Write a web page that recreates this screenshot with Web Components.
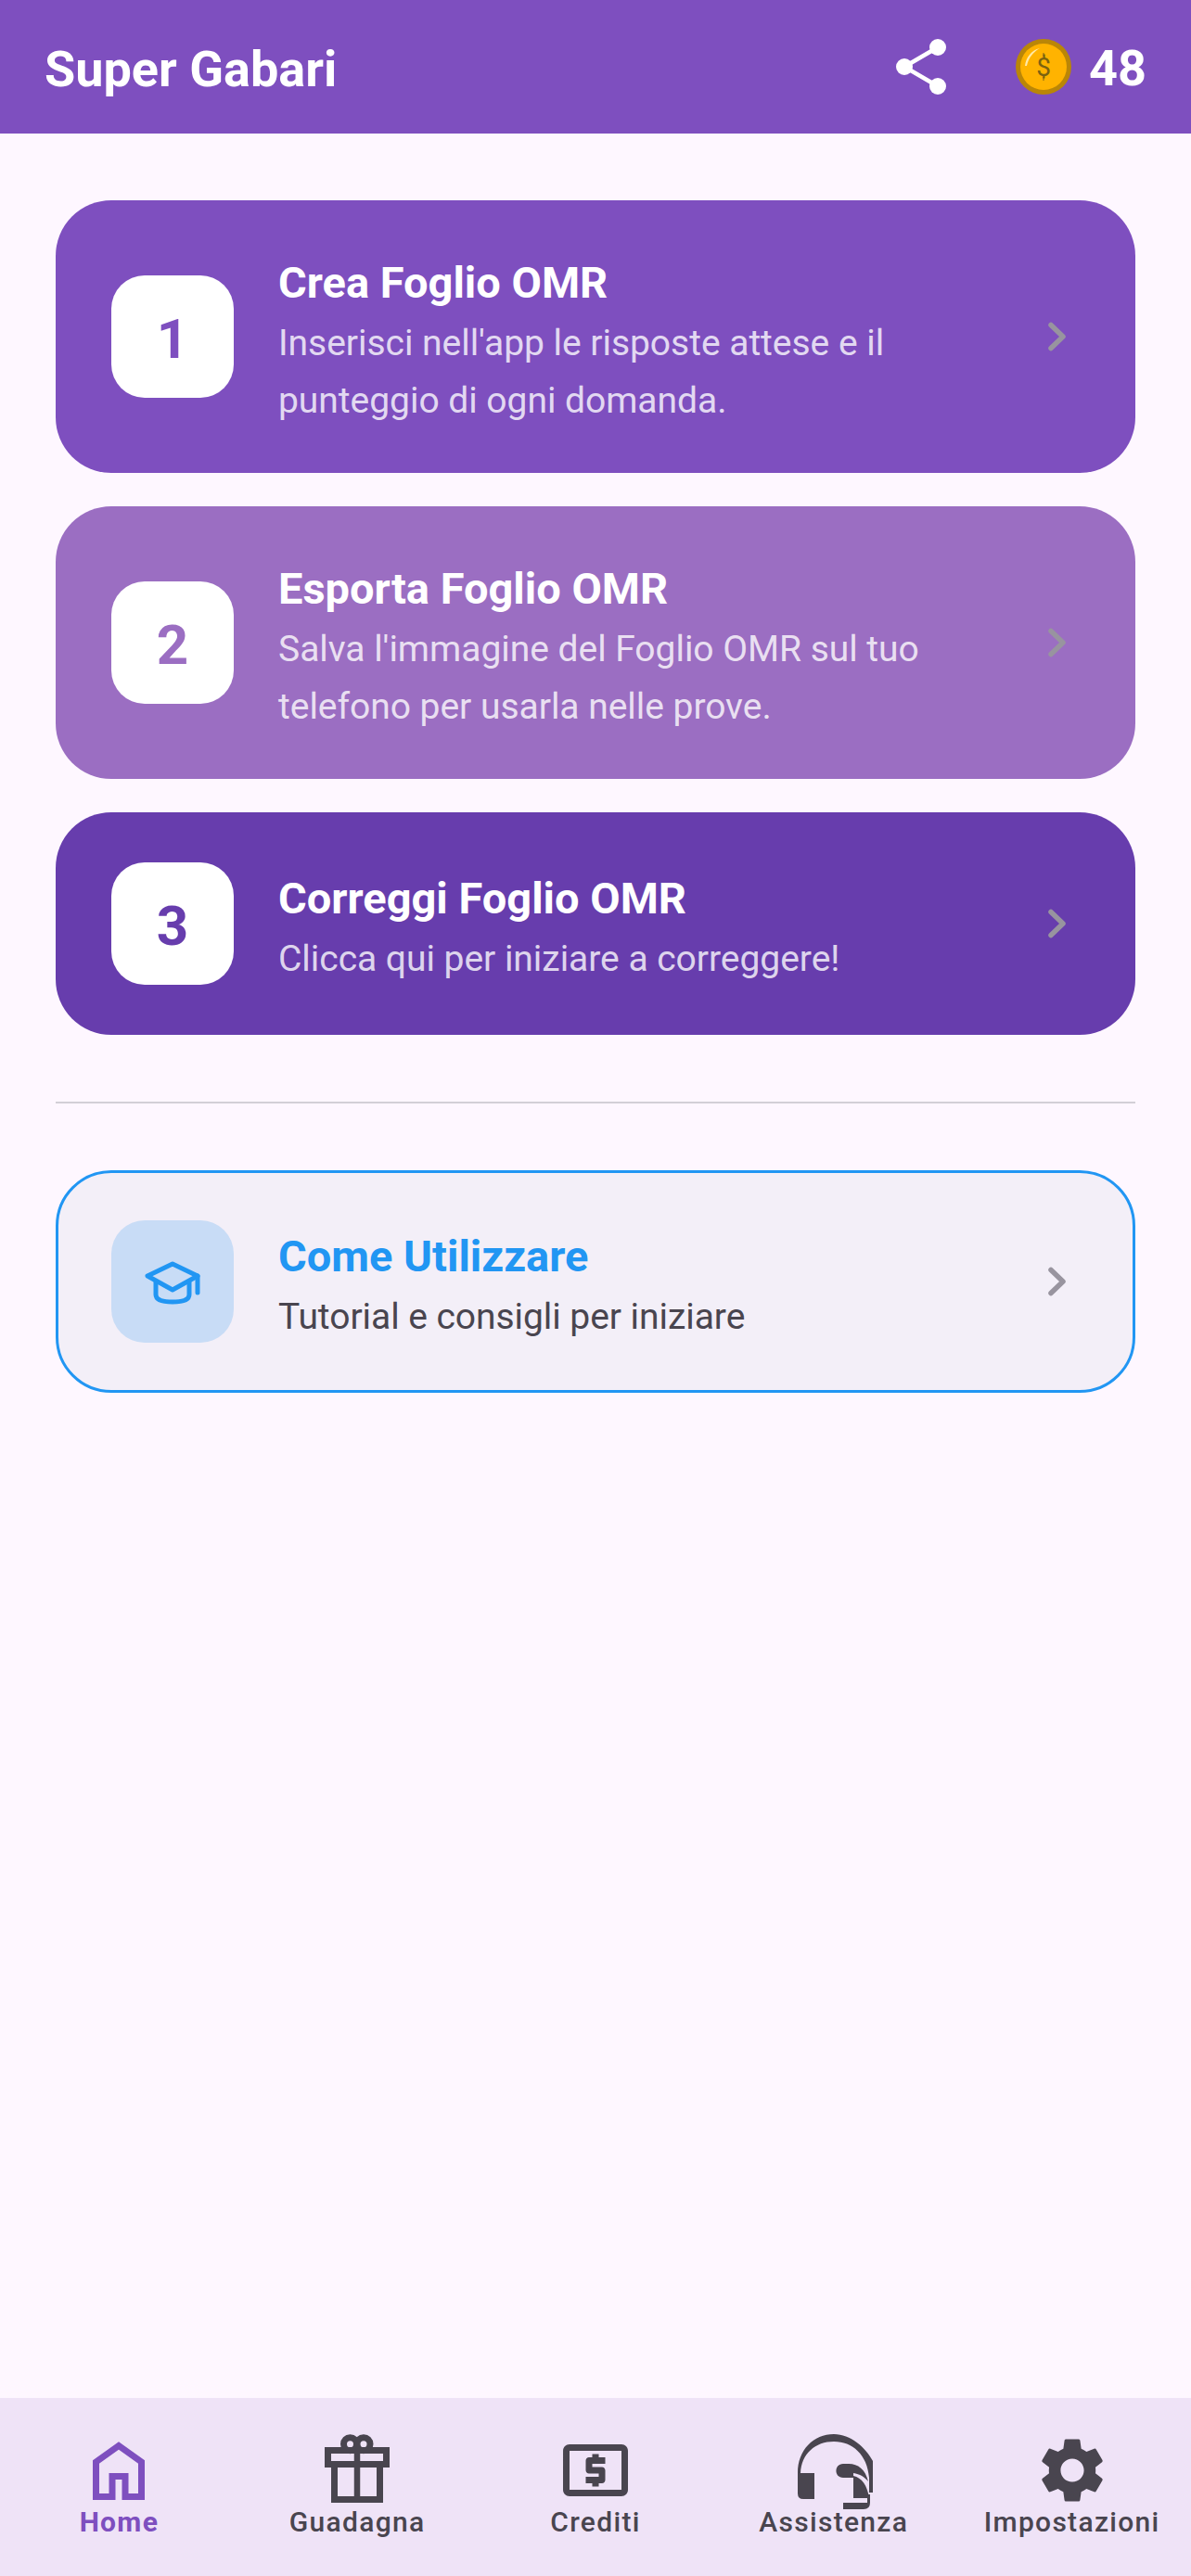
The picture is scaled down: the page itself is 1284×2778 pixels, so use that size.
<!DOCTYPE html>
<html>
<head>
<meta charset="utf-8">
<title>Super Gabari</title>
<style>
html,body{margin:0;padding:0;height:100%;}
body{display:flex;flex-direction:column;background:#FEF7FF;font-family:Roboto,"Liberation Sans",sans-serif;}
</style>
</head>
<body>
<app-bar title="Super Gabari" coins="48"></app-bar>
<home-page>
  <step-card num="1" bg="#7E4FBF" numcolor="#7E4FBF">
    <span slot="title">Crea Foglio OMR</span>
    Inserisci nell'app le risposte attese e il punteggio di ogni domanda.
  </step-card>
  <step-card num="2" bg="#9B6EC2" numcolor="#9B6EC2">
    <span slot="title">Esporta Foglio OMR</span>
    Salva l'immagine del Foglio OMR sul tuo telefono per usarla nelle prove.
  </step-card>
  <step-card num="3" bg="#673DAD" numcolor="#673DAD">
    <span slot="title">Correggi Foglio OMR</span>
    Clicca qui per iniziare a correggere!
  </step-card>
  <hr-line></hr-line>
  <help-card>
    <span slot="title">Come Utilizzare</span>
    Tutorial e consigli per iniziare
  </help-card>
</home-page>
<bottom-nav>
  <nav-item label="Home" icon="home" active></nav-item>
  <nav-item label="Guadagna" icon="gift"></nav-item>
  <nav-item label="Crediti" icon="atm"></nav-item>
  <nav-item label="Assistenza" icon="headset"></nav-item>
  <nav-item label="Impostazioni" icon="settings"></nav-item>
</bottom-nav>

<script>
// Icons for the bottom bar, all on a 84px box
const ICONS={
  home:`<path d="M17.5 70.5V33L42 15.5 66.5 33V70.5H49V48.5H35V70.5Z" fill="none" stroke="currentColor" stroke-width="7"/>`,
  gift:`<g fill="none" stroke="currentColor" stroke-width="7">
    <circle cx="34.5" cy="13.7" r="7"/><circle cx="49" cy="13.7" r="7"/>
    <rect x="10.5" y="20.5" width="63" height="15"/>
    <path d="M17.5 35V73.5H66.5V35"/><path d="M42 20V74" stroke-width="6.5"/>
  </g>`,
  atm:`<path transform="scale(3.5)" fill="currentColor" d="M11 17h2v-1h1c.55 0 1-.45 1-1v-3c0-.55-.45-1-1-1h-3v-1h4V8h-2V7h-2v1h-1c-.55 0-1 .45-1 1v3c0 .55.45 1 1 1h3v1H9v2h2v1zm9-13H4c-1.11 0-1.99.89-1.99 2L2 18c0 1.11.89 2 2 2h16c1.11 0 2-.89 2-2V6c0-1.11-.89-2-2-2zm0 14H4V6h16v12z"/>`,
  headset:`<g fill="currentColor">
    <path d="M3 45H21V73H9Q3 73 3 67Z"/>
    <path d="M3 45C3 20 20 3 42 3 60 3 76 17 84 32V66H80V50C78 25 62 11 42 11 22 11 7 24 6 45Z"/>
    <path d="M52 35H58C68 35 76 41 79 54 75 49 70 46 63 45V50H52C42 50 42 35 52 35Z"/>
    <path d="M63 48C72 50 78 58 80 72H63Z"/>
    <path d="M52 77H78V68H81V77Q81 84 74 84H52Z"/>
  </g>`,
  settings:`<path transform="scale(3.5)" fill="currentColor" d="M19.14 12.94c.04-.3.06-.61.06-.94 0-.32-.02-.64-.07-.94l2.03-1.58c.18-.14.23-.41.12-.61l-1.92-3.32c-.12-.22-.37-.29-.59-.22l-2.39.96c-.5-.38-1.03-.7-1.62-.94l-.36-2.54c-.04-.24-.24-.41-.48-.41h-3.84c-.24 0-.43.17-.47.41l-.36 2.54c-.59.24-1.13.57-1.62.94l-2.39-.96c-.22-.08-.47 0-.59.22L2.74 8.87c-.12.21-.08.47.12.61l2.03 1.58c-.05.3-.09.63-.09.94s.02.64.07.94l-2.03 1.58c-.18.14-.23.41-.12.61l1.92 3.32c.12.22.37.29.59.22l2.39-.96c.5.38 1.03.7 1.62.94l.36 2.54c.05.24.24.41.48.41h3.84c.24 0 .44-.17.47-.41l.36-2.54c.59-.24 1.13-.56 1.62-.94l2.39.96c.22.08.47 0 .59-.22l1.92-3.32c.12-.22.07-.47-.12-.61l-2.01-1.58zM12 15.6c-1.98 0-3.6-1.62-3.6-3.6s1.62-3.6 3.6-3.6 3.6 1.62 3.6 3.6-1.62 3.6-3.6 3.6z"/>`
}
const CHEVRON=`<svg width="54" height="54" viewBox="0 0 54 54"><path d="M23 14.500L36 27 23 39.500" fill="none" stroke="#98949F" stroke-width="5.500" stroke-linecap="round" stroke-linejoin="round"/></svg>`

class AppBar extends HTMLElement{
    constructor(){
        super();
        this.attachShadow({mode:'open'});
        this.shadowRoot.innerHTML=`
        <style>
        :host{display:flex;align-items:center;height:144px;padding:0 48px;box-sizing:border-box;background:#7E4FBF;color:#fff;flex:none;}
        h1{margin:0;flex:1;font-size:54px;font-weight:700;line-height:64px;padding-top:6px;}
        svg{display:block;flex:none;}
        .coins{font-size:54px;font-weight:700;line-height:64px;margin-left:19px;padding-top:4px;}
        .share{margin-right:72px;}
        text{font-family:Roboto,sans-serif;}
        </style>
        <h1>${this.getAttribute('title')}</h1>
        <svg class="share" width="60" height="60" viewBox="0 0 60 60">
          <path d="M48 9L12 30 48 51" fill="none" stroke="#fff" stroke-width="4.500"/>
          <circle cx="48" cy="9" r="9" fill="#fff"/><circle cx="12" cy="30" r="9" fill="#fff"/><circle cx="48" cy="51" r="9" fill="#fff"/>
        </svg>
        <svg width="60" height="60" viewBox="0 0 60 60">
          <circle cx="30" cy="30" r="30" fill="#BA8607"/>
          <circle cx="30" cy="30" r="25" fill="#FFB300"/>
          <path d="M10 29C11 20 17 12 26 10 19 14 14 20 12 29Z" fill="#FFE9A8"/>
          <path d="M30 15V19M30 41V45" stroke="#A87F12" stroke-width="1.500"/>
          <text x="30" y="40" text-anchor="middle" font-size="28" fill="#7A6210">$</text>
        </svg>
        <span class="coins">${this.getAttribute('coins')}</span>`
    }
}

class HomePage extends HTMLElement{
    constructor(){
        super();
        this.attachShadow({mode:'open'});
        this.shadowRoot.innerHTML=`
        <style>
        :host{display:flex;flex-direction:column;flex:1;padding:72px 60px 0;gap:36px;}
        </style>
        <slot></slot>`
    }
}

class StepCard extends HTMLElement{
    constructor(){
        super();
        this.attachShadow({mode:'open'});
        this.shadowRoot.innerHTML=`
        <style>
        :host{display:flex;align-items:center;gap:48px;padding:54px 60px;border-radius:60px;color:#fff;background:${this.getAttribute('bg')};}
        .num{flex:none;width:132px;height:132px;box-sizing:border-box;padding-top:4px;border-radius:36px;background:#fff;display:flex;align-items:center;justify-content:center;font-size:60px;font-weight:700;color:${this.getAttribute('numcolor')};}
        .txt{flex:1;min-width:0;padding-top:4px;margin-bottom:-7px;}
        .t{font-size:47px;font-weight:700;line-height:62px;}
        .s{font-size:39px;line-height:62px;margin-top:3px;letter-spacing:-.03px;color:rgba(255,255,255,.8);}
        svg{flex:none;display:block;}
        </style>
        <div class="num">${this.getAttribute('num')}</div>
        <div class="txt"><div class="t"><slot name="title"></slot></div><div class="s"><slot></slot></div></div>
        ${CHEVRON}`
    }
}

class HrLine extends HTMLElement{
    constructor(){
        super();
        this.attachShadow({mode:'open'});
        this.shadowRoot.innerHTML=`<style>:host{display:block;height:2px;background:#D3CFD6;margin:36px 0;}</style>`
    }
}

class HelpCard extends HTMLElement{
    constructor(){
        super();
        this.attachShadow({mode:'open'});
        this.shadowRoot.innerHTML=`
        <style>
        :host{display:flex;align-items:center;gap:48px;padding:51px 57px;border:3px solid #2196F3;border-radius:60px;background:#F3EFF8;}
        .ico{flex:none;width:132px;height:132px;border-radius:36px;background:#C8DCF6;display:flex;align-items:center;justify-content:center;}
        .txt{flex:1;min-width:0;padding-top:4px;margin-bottom:-7px;}
        .t{font-size:47px;font-weight:700;line-height:62px;color:#2196F3;}
        .s{font-size:39px;line-height:62px;margin-top:3px;letter-spacing:-.05px;color:#49454F;}
        svg{flex:none;display:block;}
        </style>
        <div class="ico"><svg width="72" height="72" viewBox="0 0 72 72" fill="none" stroke="#2196F3" stroke-width="5" stroke-linejoin="round" stroke-linecap="round">
          <path d="M36 17L9 30 36 45 63 30Z"/><path d="M63 30V48"/><path d="M18 37V50C18 56 27 58 36 58 45 58 54 56 54 50V37"/>
        </svg></div>
        <div class="txt"><div class="t"><slot name="title"></slot></div><div class="s"><slot></slot></div></div>
        ${CHEVRON}`
    }
}

class BottomNav extends HTMLElement{
    constructor(){
        super();
        this.attachShadow({mode:'open'});
        this.shadowRoot.innerHTML=`
        <style>:host{display:flex;flex:none;height:192px;box-sizing:border-box;padding-top:36px;background:#EFE3F7;}</style>
        <slot></slot>`
    }
}

class NavItem extends HTMLElement{
    constructor(){
        super();
        this.attachShadow({mode:'open'});
        const active=this.hasAttribute('active')
        this.shadowRoot.innerHTML=`
        <style>
        :host{display:flex;flex-direction:column;align-items:center;flex:1 1 0;min-width:0;color:${active?'#7E4FBF':'#49454F'};}
        svg{display:block;flex:none;}
        span{font-size:30px;line-height:28px;letter-spacing:1.3px;font-weight:${active?700:500};white-space:nowrap;}
        </style>
        <svg width="84" height="84" viewBox="0 0 84 84">${ICONS[this.getAttribute('icon')]}</svg>
        <span>${this.getAttribute('label')}</span>`
    }
}

window.customElements.define('app-bar',AppBar)
window.customElements.define('home-page',HomePage)
window.customElements.define('step-card',StepCard)
window.customElements.define('hr-line',HrLine)
window.customElements.define('help-card',HelpCard)
window.customElements.define('bottom-nav',BottomNav)
window.customElements.define('nav-item',NavItem)
</script>
</body>
</html>
